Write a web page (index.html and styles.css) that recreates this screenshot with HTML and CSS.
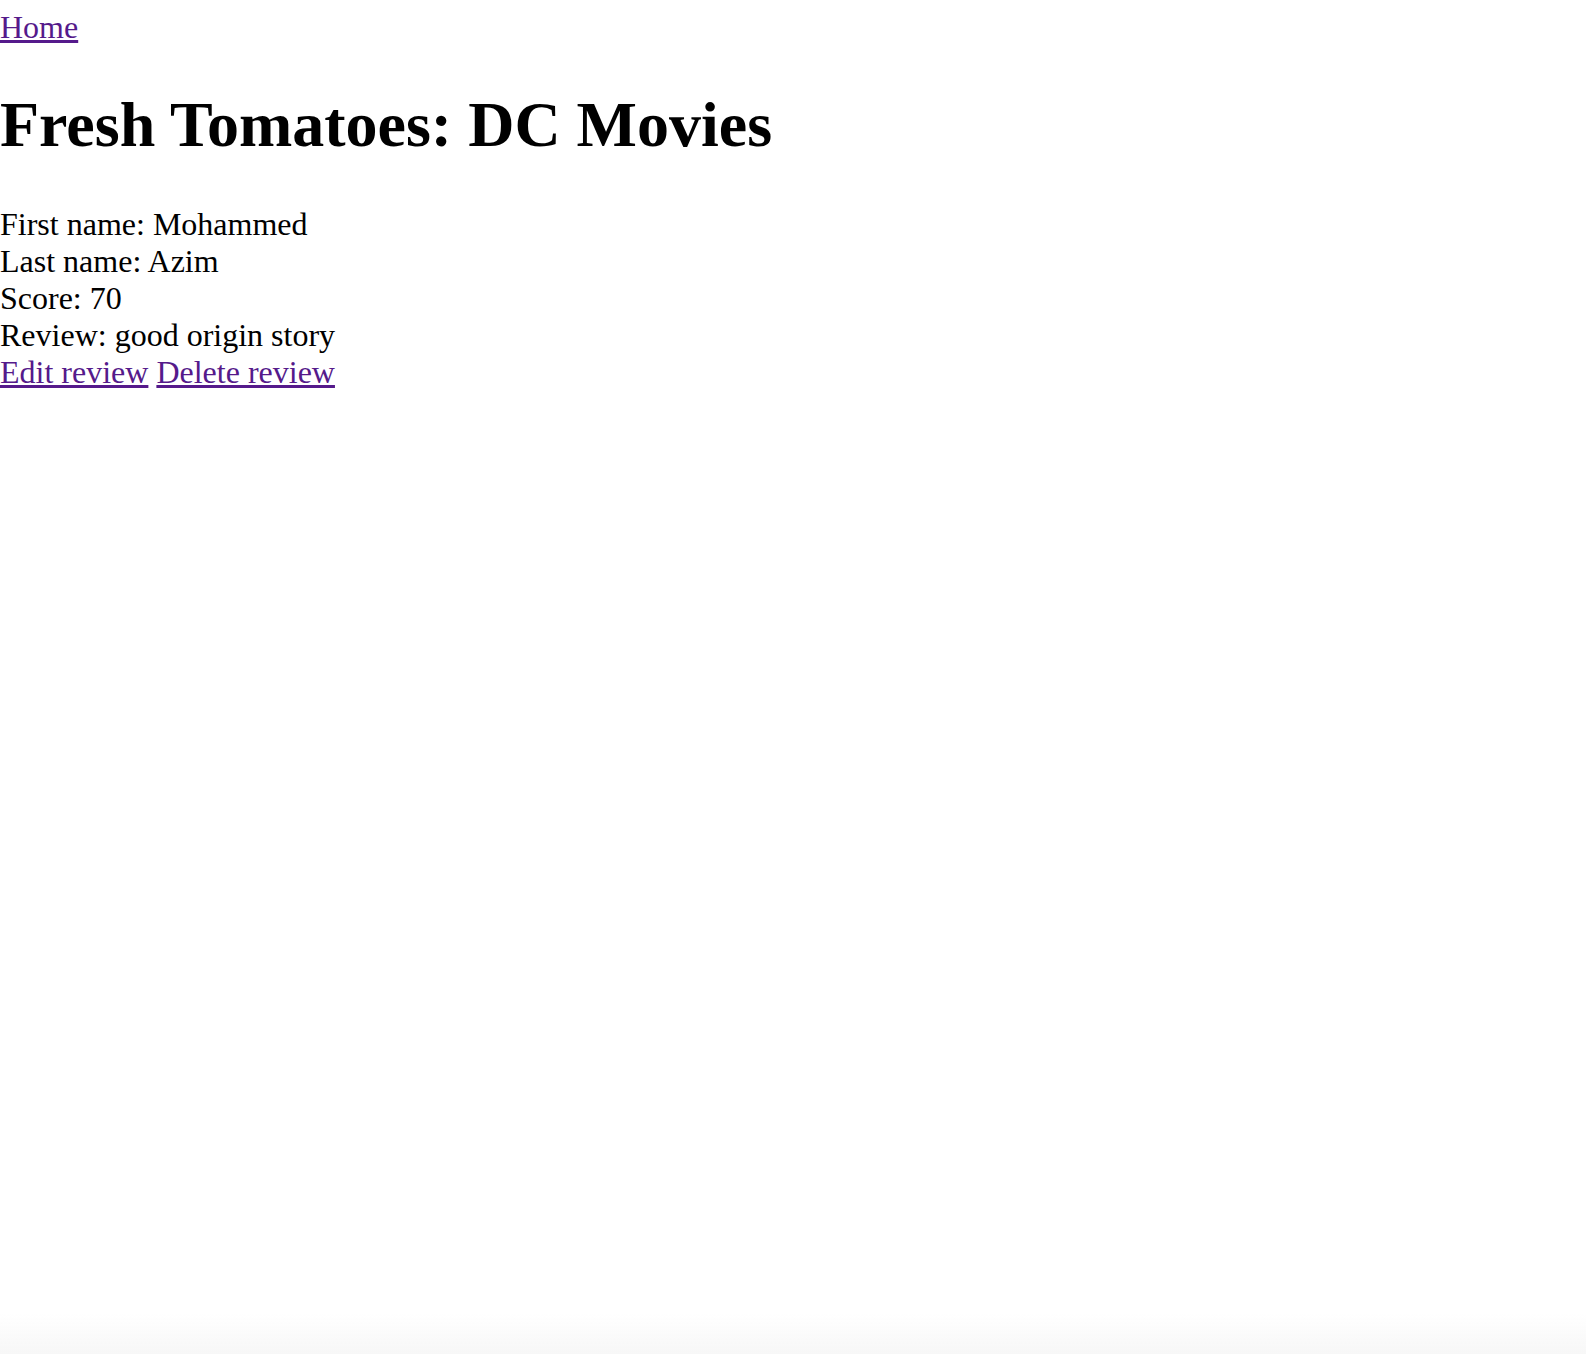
FILE: index.html
```html
<!DOCTYPE html>
<html lang="en">
<head>
<meta charset="utf-8">
<title>Fresh Tomatoes: DC Movies</title>
<link rel="stylesheet" href="styles.css">
</head>
<body class="page">
  <a class="link" href="#">Home</a>
  <h1 class="title">Fresh Tomatoes: DC Movies</h1>
  <div class="review">
    <div class="row">First name: Mohammed</div>
    <div class="row">Last name: Azim</div>
    <div class="row">Score: 70</div>
    <div class="row">Review: good origin story</div>
    <div class="row"><a class="link" href="#">Edit review</a> <a class="link" href="#">Delete review</a></div>
  </div>
</body>
</html>
```
FILE: styles.css
```css
html {
  background: #ffffff;
}
.page {
  margin: 9px 0 0 0;
  font-family: "Liberation Serif", "Times New Roman", serif;
  font-size: 32px;
  line-height: normal;
  color: #000000;
  min-height: 1345px;
}
.page::after {
  content: "";
  position: fixed;
  left: 0;
  right: 0;
  bottom: 0;
  height: 40px;
  background: linear-gradient(to bottom, rgba(248,248,248,0), rgba(246,246,246,0.9));
  pointer-events: none;
}
.link {
  color: #551a8b;
  text-decoration: underline;
}
.title {
  font-size: 64px;
  font-weight: bold;
  margin: 41.88px 0 43.88px 0;
}
.review {
  display: block;
}
.row {
  display: block;
}
```
